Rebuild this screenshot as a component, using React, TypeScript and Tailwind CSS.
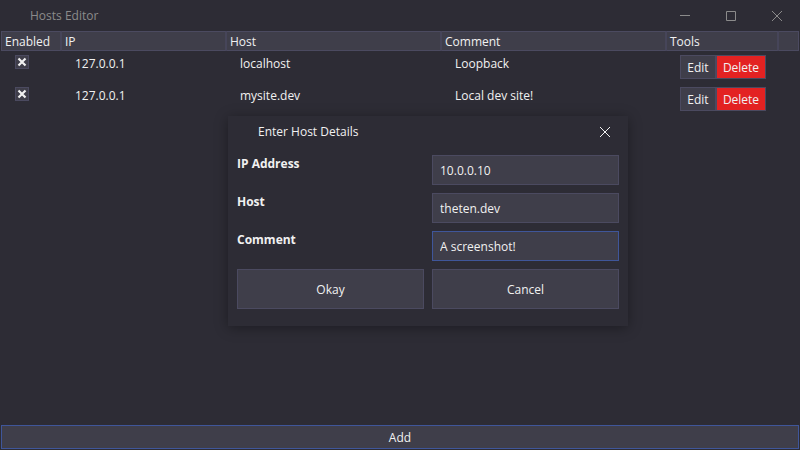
import { useState } from "react";
import type { ReactNode } from "react";

const FONT = "font-['Segoe_UI','Open_Sans','Noto_Sans',sans-serif]";

type Entry = { ip: string; host: string; comment: string };

const entries: Entry[] = [
  { ip: "127.0.0.1", host: "localhost", comment: "Loopback" },
  { ip: "127.0.0.1", host: "mysite.dev", comment: "Local dev site!" },
];

function CaptionButton({ label, children }: { label: string; children: ReactNode }) {
  return (
    <button type="button" aria-label={label} className="flex h-full w-[46px] items-center justify-center">
      <svg width="10" height="10" viewBox="0 0 10 10" fill="none" stroke="currentColor" aria-hidden="true">
        {children}
      </svg>
    </button>
  );
}

function EnabledBox({ host }: { host: string }) {
  const [checked, setChecked] = useState(true);
  return (
    <label className="grid size-3.5">
      <input
        type="checkbox"
        aria-label={`${host} enabled`}
        checked={checked}
        onChange={(e) => setChecked(e.target.checked)}
        className="peer col-start-1 row-start-1 size-3.5 appearance-none border border-[#4b4a60] bg-[#3f3e4a]"
      />
      <svg
        viewBox="0 0 14 14"
        className="pointer-events-none invisible col-start-1 row-start-1 size-3.5 peer-checked:visible"
        stroke="#f1f1f1"
        strokeWidth="2.2"
        aria-hidden="true"
      >
        <path d="M3.5 3.5 10.5 10.5M10.5 3.5 3.5 10.5" />
      </svg>
    </label>
  );
}

function HostsTable() {
  const head =
    "h-5 border-y border-r-2 border-[#4b4a60] border-r-[#464559] bg-[#3f3e4a] pt-0.5 pl-[3px] text-left leading-4 font-normal";
  const cell = "pt-1 pl-[13px]";
  return (
    <table className="w-full table-fixed border-separate border-spacing-0">
      <colgroup>
        <col className="w-[61px]" />
        <col className="w-[165px]" />
        <col className="w-[215px]" />
        <col className="w-[225px]" />
        <col className="w-[112px]" />
        <col />
      </colgroup>
      <thead>
        <tr>
          <th className={`${head} border-l border-l-[#4b4a60]`}>Enabled</th>
          <th className={head}>IP</th>
          <th className={head}>Host</th>
          <th className={head}>Comment</th>
          <th className={head}>Tools</th>
          <td className="border border-l-0 border-[#4b4a60] bg-[#3f3e4a]" />
        </tr>
      </thead>
      <tbody>
        {entries.map((entry) => (
          <tr key={entry.host} className="h-8 align-top">
            <td className="pt-1 pl-3.5">
              <EnabledBox host={entry.host} />
            </td>
            <td className={cell}>{entry.ip}</td>
            <td className={cell}>{entry.host}</td>
            <td className={cell}>{entry.comment}</td>
            <td className={cell}>
              <div className="flex">
                <button type="button" className="h-6 w-9 border border-[#4b4a60] bg-[#3f3e4a] pt-0.5">
                  Edit
                </button>
                <button type="button" className="h-6 w-[50px] border border-[#4b4a60] bg-[#e32222] pt-0.5">
                  Delete
                </button>
              </div>
            </td>
            <td />
          </tr>
        ))}
      </tbody>
    </table>
  );
}

function Field({ id, label, value, active }: { id: string; label: string; value: string; active?: boolean }) {
  return (
    <>
      <label htmlFor={id} className="font-bold">
        {label}
      </label>
      <input
        id={id}
        type="text"
        defaultValue={value}
        className={`h-[30px] w-full border bg-[#3f3e4a] px-[7px] outline-none ${
          active ? "border-[#3f569a]" : "border-[#4b4a60]"
        }`}
      />
    </>
  );
}

function HostDialog() {
  const button = "h-10 border border-[#4b4a60] bg-[#3f3e4a] pt-0.5";
  return (
    <div
      role="dialog"
      aria-labelledby="dialog-title"
      className="absolute top-[116px] left-[228px] w-[400px] bg-[#2d2c35] pb-[17px] shadow-[0_2px_12px_rgba(0,0,0,0.35)]"
    >
      <div className="flex h-8 items-center justify-between pl-[30px]">
        <h2 id="dialog-title">Enter Host Details</h2>
        <CaptionButton label="Close dialog">
          <path d="M0 0 10 10M10 0 0 10" />
        </CaptionButton>
      </div>
      <form className="grid grid-cols-2 gap-2 px-[9px] pt-[7px]" onSubmit={(e) => e.preventDefault()}>
        <Field id="ip" label="IP Address" value="10.0.0.10" />
        <Field id="host" label="Host" value="theten.dev" />
        <Field id="comment" label="Comment" value="A screenshot!" active />
        <button type="submit" className={button}>
          Okay
        </button>
        <button type="button" className={button}>
          Cancel
        </button>
      </form>
    </div>
  );
}

export default function App() {
  return (
    <div className={`relative flex min-h-screen flex-col bg-[#2d2c35] text-xs leading-[18px] text-[#f1f1f1] ${FONT}`}>
      <header className="flex h-[31px] items-center justify-between pl-[30px] text-[#8b8b8b]">
        <h1>Hosts Editor</h1>
        <div className="flex h-full">
          <CaptionButton label="Minimize">
            <path d="M0 4.5H10" />
          </CaptionButton>
          <CaptionButton label="Maximize">
            <path d="M.5 .5H9.5V9.5H.5Z" />
          </CaptionButton>
          <CaptionButton label="Close">
            <path d="M0 0 10 10M10 0 0 10" />
          </CaptionButton>
        </div>
      </header>
      <main className="flex grow flex-col justify-between px-px pb-px">
        <HostsTable />
        <button type="button" className="h-6 border border-[#3f569a] bg-[#3f3e4a] pt-0.5">
          Add
        </button>
      </main>
      <HostDialog />
    </div>
  );
}
